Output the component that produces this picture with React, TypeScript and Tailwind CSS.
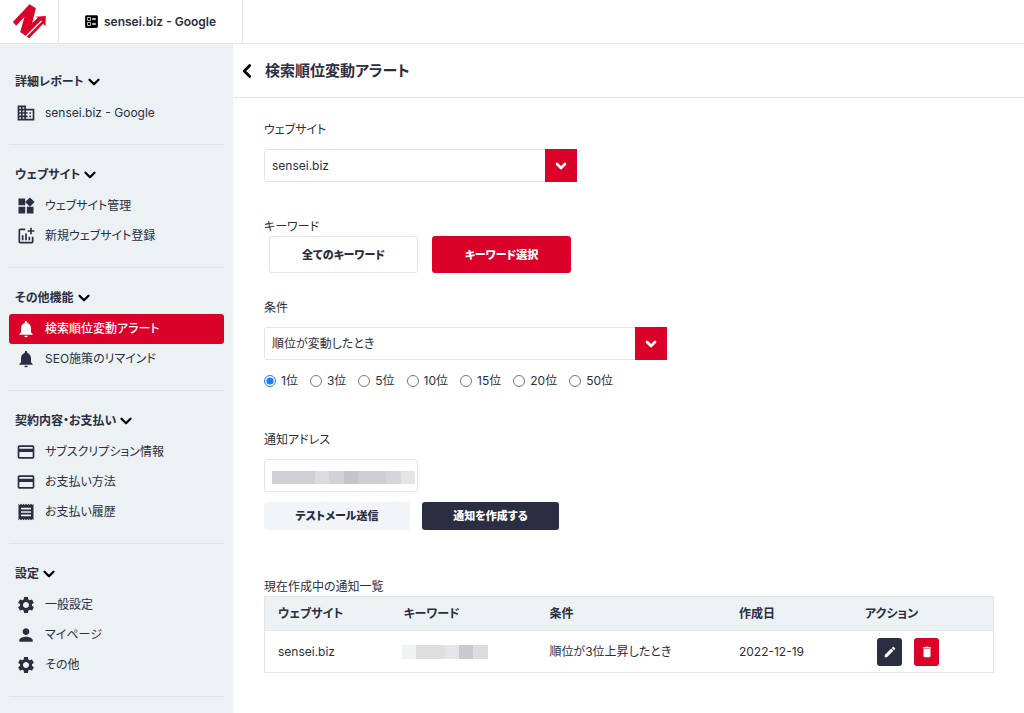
import { useState, type ReactNode } from "react";
import type { IconType } from "react-icons";
import { ChevronDown, ChevronLeft } from "lucide-react";
import {
  MdAddchart,
  MdBallot,
  MdCreditCard,
  MdDelete,
  MdDomain,
  MdEdit,
  MdNotifications,
  MdPerson,
  MdReceipt,
  MdSettings,
  MdWidgets,
} from "react-icons/md";

type NavItem = { label: string; icon: IconType; active?: boolean };
type NavSection = { title: string; items: NavItem[] };

const sections: NavSection[] = [
  { title: "詳細レポート", items: [{ label: "sensei.biz - Google", icon: MdDomain }] },
  {
    title: "ウェブサイト",
    items: [
      { label: "ウェブサイト管理", icon: MdWidgets },
      { label: "新規ウェブサイト登録", icon: MdAddchart },
    ],
  },
  {
    title: "その他機能",
    items: [
      { label: "検索順位変動アラート", icon: MdNotifications, active: true },
      { label: "SEO施策のリマインド", icon: MdNotifications },
    ],
  },
  {
    title: "契約内容・お支払い",
    items: [
      { label: "サブスクリプション情報", icon: MdCreditCard },
      { label: "お支払い方法", icon: MdCreditCard },
      { label: "お支払い履歴", icon: MdReceipt },
    ],
  },
  {
    title: "設定",
    items: [
      { label: "一般設定", icon: MdSettings },
      { label: "マイページ", icon: MdPerson },
      { label: "その他", icon: MdSettings },
    ],
  },
];

const ranks = ["1位", "3位", "5位", "10位", "15位", "20位", "50位"];

function Logo() {
  return (
    <svg viewBox="0 0 104 105" className="size-[35px]" role="img" aria-label="ロゴ">
      <path fill="#db0229" d="M2 54 52 1l19 12-11 44 17-16-8-3 32-2-1 31-7-8-42 44-27-19 13-46-25 27z" />
      <path stroke="#fff" strokeWidth="4" fill="none" d="M42 97 88 51" />
    </svg>
  );
}

function Section({ title, items }: NavSection) {
  const [open, setOpen] = useState(true);
  return (
    <section className="border-b border-[#dfe3e6] pt-[15px] pb-4">
      <button
        type="button"
        aria-expanded={open}
        onClick={() => setOpen(!open)}
        className="mb-px flex h-[30px] items-center gap-px pl-1.5 font-bold"
      >
        {title}
        <ChevronDown className="size-[18px] text-black" strokeWidth={3} />
      </button>
      {open && (
        <ul>
          {items.map(({ label, icon: Icon, active }) => (
            <li key={label}>
              <a
                href="#"
                className={
                  active
                    ? "flex h-[30px] items-center gap-[9px] rounded-[3px] bg-[#db0229] pl-[7px] font-medium text-white"
                    : "flex h-[30px] items-center gap-[9px] pl-[7px]"
                }
              >
                <Icon className="size-5 shrink-0" />
                {label}
              </a>
            </li>
          ))}
        </ul>
      )}
    </section>
  );
}

function Select({ id, children }: { id: string; children: ReactNode }) {
  return (
    <div className="relative">
      <select
        id={id}
        className="h-[33px] w-full appearance-none rounded-[3px] border border-[#e2e4e7] bg-white pr-10 pl-[7px]"
      >
        {children}
      </select>
      <span className="pointer-events-none absolute inset-y-0 right-0 flex w-8 items-center justify-center bg-[#db0229] text-white">
        <ChevronDown className="size-4" strokeWidth={4} />
      </span>
    </div>
  );
}

export default function App() {
  const [rank, setRank] = useState("1位");
  return (
    <div className="flex min-h-screen flex-col bg-white font-['Inter','Noto_Sans_CJK_JP',sans-serif] text-[12px] leading-[18px] text-[#2b2d42] [font-feature-settings:'palt']">
      <header className="flex h-11 border-b border-[#e2e4e7]">
        <a href="#" className="flex w-[59px] items-center justify-center border-r border-[#e2e4e7]">
          <Logo />
        </a>
        <a href="#" className="flex items-center gap-1 border-r border-[#e2e4e7] pr-[26px] pl-6 font-semibold">
          <MdBallot className="size-[17px] text-black" />
          sensei.biz - Google
        </a>
      </header>
      <div className="flex flex-1">
        <nav className="w-[233px] shrink-0 bg-[#ecf1f4] px-[9px] pt-2">
          {sections.map((s) => (
            <Section key={s.title} {...s} />
          ))}
        </nav>
        <main className="min-w-0 flex-1">
          <div className="flex h-[54px] items-center gap-[7px] border-b border-[#e2e4e7] pl-[3px]">
            <button type="button" aria-label="戻る">
              <ChevronLeft className="size-[22px] text-black" strokeWidth={3} />
            </button>
            <h1 className="text-[15px] font-bold">検索順位変動アラート</h1>
          </div>
          <div className="pt-[23px] pr-[30px] pb-10 pl-[31px]">
            <div className="max-w-[313px]">
              <label htmlFor="site" className="mb-2.5 block">
                ウェブサイト
              </label>
              <Select id="site">
                <option>sensei.biz</option>
              </Select>
            </div>

            <div className="mt-9">
              <p>キーワード</p>
              <div className="flex gap-3.5 pl-[5px] text-[11px] font-black">
                <button type="button" className="h-[37px] w-[149px] rounded-[3px] border border-[#e2e4e7]">
                  全てのキーワード
                </button>
                <button type="button" className="h-[37px] w-[139px] rounded-[3px] bg-[#db0229] text-white">
                  キーワード選択
                </button>
              </div>
            </div>

            <div className="mt-[26px]">
              <label htmlFor="condition" className="mb-2.5 block">
                条件
              </label>
              <div className="max-w-[403px]">
                <Select id="condition">
                  <option>順位が変動したとき</option>
                </Select>
              </div>
              <div className="mt-3 flex flex-wrap gap-3">
                {ranks.map((r) => (
                  <label key={r} className="flex items-center gap-[5px]">
                    <input
                      type="radio"
                      name="rank"
                      checked={rank === r}
                      onChange={() => setRank(r)}
                      className="size-3 accent-[#1a7fff]"
                    />
                    {r}
                  </label>
                ))}
              </div>
            </div>

            <div className="mt-[41px]">
              <label htmlFor="address" className="mb-2.5 block">
                通知アドレス
              </label>
              <div className="relative w-[154px]">
                <input
                  id="address"
                  type="email"
                  className="block h-[33px] w-full rounded-[3px] border border-[#e2e4e7] px-[7px]"
                />
                <div className="pointer-events-none absolute top-3 right-[3px] left-2 flex h-[13px]">
                  <span className="flex-3 bg-[#d0cfd6]" />
                  <span className="flex-1 bg-[#dcdcdf]" />
                  <span className="flex-1 bg-[#d2d2d8]" />
                  <span className="flex-1 bg-[#c4c4cd]" />
                  <span className="flex-2 bg-[#cfced5]" />
                  <span className="flex-1 bg-[#d6d6da]" />
                  <span className="flex-1 bg-[#e3e5e8]" />
                </div>
              </div>
              <div className="mt-2.5 flex gap-3 text-[11px] font-black">
                <button type="button" className="h-7 w-[146px] rounded-[3px] bg-[#f1f5f7]">
                  テストメール送信
                </button>
                <button type="button" className="h-7 w-[137px] rounded-[3px] bg-[#2b2d42] text-white">
                  通知を作成する
                </button>
              </div>
            </div>

            <h2 className="mt-12">現在作成中の通知一覧</h2>
            <table className="w-full table-fixed border-collapse border border-[#e2e4e7] text-left">
              <colgroup>
                <col className="w-[17.3%]" />
                <col className="w-[20%]" />
                <col className="w-[26%]" />
                <col className="w-[17.3%]" />
                <col />
              </colgroup>
              <thead className="border-b border-[#e2e4e7] bg-[#ecf1f4]">
                <tr className="h-[34px]">
                  <th className="pl-[13px] font-bold">ウェブサイト</th>
                  <th className="pl-[13px] font-bold">キーワード</th>
                  <th className="pl-[13px] font-bold">条件</th>
                  <th className="pl-[13px] font-bold">作成日</th>
                  <th className="pl-[13px] font-bold">アクション</th>
                </tr>
              </thead>
              <tbody>
                <tr className="h-[42px]">
                  <td className="pl-[13px]">sensei.biz</td>
                  <td className="pl-[11px]">
                    <div className="flex h-3.5 w-[86px]">
                      <span className="flex-1 bg-[#eef3f5]" />
                      <span className="flex-2 bg-[#dedfe1]" />
                      <span className="flex-1 bg-[#e4e5e8]" />
                      <span className="flex-1 bg-[#c9c9d1]" />
                      <span className="flex-1 bg-[#dcdce0]" />
                    </div>
                  </td>
                  <td className="pl-[13px]">順位が3位上昇したとき</td>
                  <td className="pl-[13px]">2022-12-19</td>
                  <td className="pl-[25px]">
                    <div className="flex gap-3 text-white">
                      <button
                        type="button"
                        aria-label="編集"
                        className="flex h-7 w-[25px] items-center justify-center rounded-[3px] bg-[#2b2d42]"
                      >
                        <MdEdit className="size-3.5" />
                      </button>
                      <button
                        type="button"
                        aria-label="削除"
                        className="flex h-7 w-[25px] items-center justify-center rounded-[3px] bg-[#db0229]"
                      >
                        <MdDelete className="size-3.5" />
                      </button>
                    </div>
                  </td>
                </tr>
              </tbody>
            </table>
          </div>
        </main>
      </div>
    </div>
  );
}
